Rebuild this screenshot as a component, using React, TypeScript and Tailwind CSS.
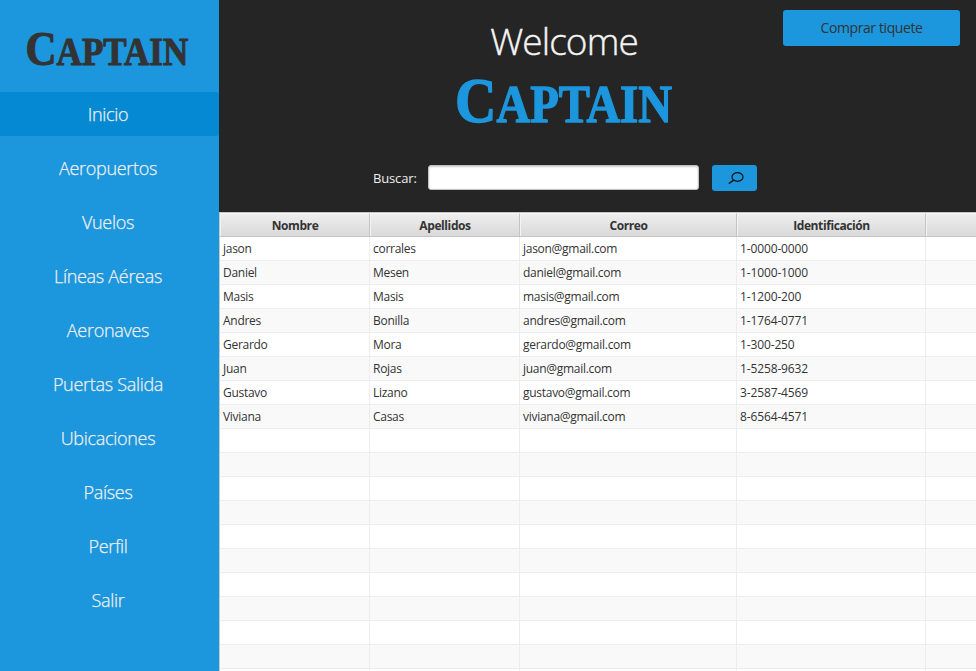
const menu = [
  "Inicio",
  "Aeropuertos",
  "Vuelos",
  "Líneas Aéreas",
  "Aeronaves",
  "Puertas Salida",
  "Ubicaciones",
  "Países",
  "Perfil",
  "Salir",
];

const columns = ["Nombre", "Apellidos", "Correo", "Identificación", ""];

const people = [
  ["jason", "corrales", "jason@gmail.com", "1-0000-0000", ""],
  ["Daniel", "Mesen", "daniel@gmail.com", "1-1000-1000", ""],
  ["Masis", "Masis", "masis@gmail.com", "1-1200-200", ""],
  ["Andres", "Bonilla", "andres@gmail.com", "1-1764-0771", ""],
  ["Gerardo", "Mora", "gerardo@gmail.com", "1-300-250", ""],
  ["Juan", "Rojas", "juan@gmail.com", "1-5258-9632", ""],
  ["Gustavo", "Lizano", "gustavo@gmail.com", "3-2587-4569", ""],
  ["Viviana", "Casas", "viviana@gmail.com", "8-6564-4571", ""],
];

const rows = [...people, ...Array.from({ length: 11 }, () => ["", "", "", "", ""])];

const grid = "grid grid-cols-[150px_150px_217px_189px_1fr]";

function Logo({ className }: { className: string }) {
  return (
    <svg viewBox="0 0 216 46" className={`overflow-visible ${className}`} fill="currentColor" stroke="currentColor" strokeWidth="1.4" strokeLinejoin="round">
      <text x="-2" y="43.7" fontFamily="'Liberation Serif', serif" fontWeight="700" fontSize="64" textLength="217" lengthAdjust="spacingAndGlyphs">
        C<tspan fontSize="52">APTAIN</tspan>
      </text>
    </svg>
  );
}

export default function App() {
  return (
    <div className="flex h-[671px] w-[976px] overflow-hidden bg-[#252525] font-['Open_Sans','Noto_Sans',sans-serif]">
      <aside className="flex w-[219px] shrink-0 flex-col bg-[#1c96dc]">
        <div className="flex h-[92px] shrink-0 pt-[32px] pl-[27px] text-[#333]">
          <Logo className="h-[35px] w-[162px]" />
        </div>
        <nav className="flex flex-col gap-[10px]">
          {menu.map((label, i) => (
            <a
              key={label}
              className={`flex h-[44px] items-center justify-center rounded-r-[3px] pr-[3px] pt-px text-[18px] font-light tracking-[-0.3px] text-[#f0f0f0] [-webkit-text-stroke:0.25px_#f0f0f0] ${i === 0 ? "bg-[#0589d3]" : ""}`}
            >
              {label}
            </a>
          ))}
        </nav>
      </aside>
      <main className="flex min-w-0 flex-1 flex-col">
        <header className="grid h-[212px] shrink-0 grid-cols-[238px_214px_1fr] grid-rows-[72px_93px_1fr]">
          <h1 className="col-start-2 pt-[14px] text-center text-[37px] leading-[54px] font-light tracking-[-0.9px] whitespace-nowrap text-[#f4f4f4] [-webkit-text-stroke:0.4px_#f4f4f4]">Welcome</h1>
          <div className="flex justify-end pt-[10px] pr-4">
            <button className="h-9 w-[177px] rounded-[3px] bg-[#1c96dc] pb-px text-[14px] tracking-[-0.4px] text-[#333]">Comprar tiquete</button>
          </div>
          <div className="col-start-2 row-start-2 pt-[6px] text-[#1c96dc]">
            <Logo className="h-[46px] w-[216px]" />
          </div>
          <div className="col-span-3 row-start-3 flex items-start pl-[154px]">
            <label className="w-[55px] text-[13px] leading-[26px] tracking-[-0.15px] text-[#eee]">Buscar:</label>
            <input className="h-[25px] w-[271px] rounded-[3px] border border-[#c0c0c0] bg-white shadow-[inset_0_1px_2px_#ccc]" />
            <button className="ml-[13px] flex h-[26px] w-[45px] items-center justify-center rounded-[3px] bg-[#1c96dc] pl-[2px]">
              <svg className="h-3 w-4" viewBox="0 0 16 12" fill="none" stroke="#111">
                <ellipse cx="9.5" cy="5" rx="5.5" ry="4.3" strokeWidth="1.2" />
                <path d="M5.7 8.2 L0.8 11.5" strokeWidth="1.5" />
              </svg>
            </button>
          </div>
        </header>
        <section className="flex-1 border-l border-[#c8c8c8] bg-white text-[12px] tracking-[-0.28px] text-[#333]">
          <div className={`${grid} h-[25px] border-t border-b border-[#c4c4c4] bg-linear-to-b from-[#efefef] to-[#d9d9d9] font-bold tracking-[-0.4px]`}>
            {columns.map((c) => (
              <div key={c} className="flex items-center justify-center border-t border-r border-l border-t-[#f8f8f8] border-r-[#c4c4c4] border-l-[#f3f3f3] pt-[2px] last:border-r-0">
                {c}
              </div>
            ))}
          </div>
          {rows.map((r, i) => (
            <div key={i} className={`${grid} h-6 border-b border-[#ededed] ${i % 2 ? "bg-[#f9f9f9]" : "bg-white"}`}>
              {r.map((v, j) => (
                <div key={j} className={`border-r border-[#ededed] pl-[3px] leading-[24px] last:border-r-0 ${j === 3 ? "tracking-[-0.13px]" : ""}`}>
                  {v}
                </div>
              ))}
            </div>
          ))}
        </section>
      </main>
    </div>
  );
}
